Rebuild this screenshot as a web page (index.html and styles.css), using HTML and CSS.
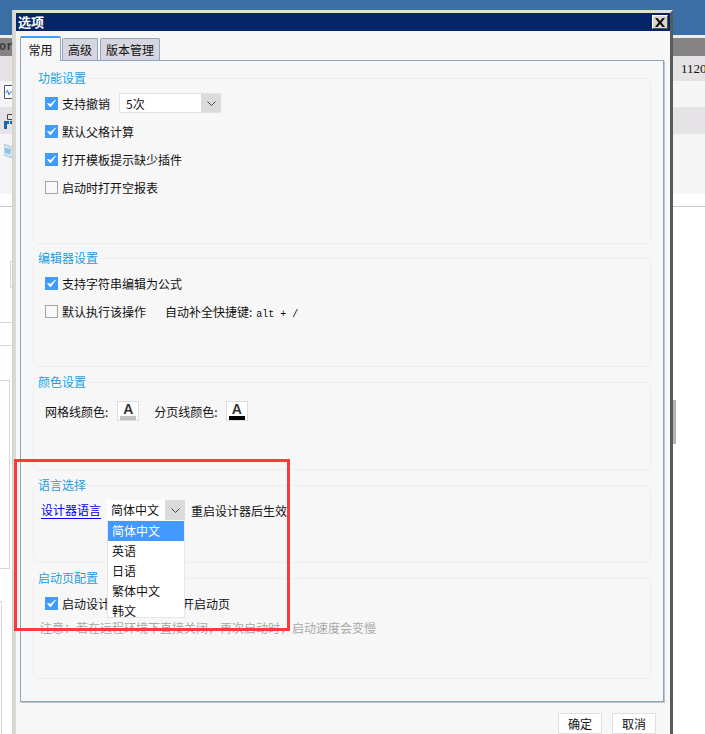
FILE: index.html
```html
<!DOCTYPE html>
<html>
<head>
    <meta charset="utf-8">
    <title>选项</title>
    <link rel="stylesheet" href="styles.css">
</head>
<body>

    <!-- designer window behind the dialog -->
    <div class="desk">
        <div class="desk-top"></div>
        <div class="desk-head"><span class="head-text">ore</span></div>
        <div class="desk-row shade"><span class="row-num">1120</span></div>
        <div class="desk-row plain"></div>
        <div class="desk-row shade tall"></div>
        <div class="desk-row plain wide"></div>
        <div class="desk-rest">
            <div class="rest-left">
                <div class="bit-field"></div>
                <div class="bit-line first"></div>
                <div class="bit-line"></div>
                <div class="bit-box"></div>
                <div class="bit-box last"></div>
            </div>
            <div class="bit-right"></div>
        </div>
    </div>
    <svg class="desk-icon icon-a" width="9" height="15" viewBox="0 0 9 15"><path d="M.5.5h8.500v13H.5z" fill="#fff" stroke="#555"/><path d="M2 8l1.500-3 1.500 5 1.500-3H9" fill="none" stroke="#3a7fc0"/></svg>
    <svg class="desk-icon icon-b" width="9" height="16" viewBox="0 0 9 16"><path d="M3.500 1.500h6v5h-6z" fill="none" stroke="#444"/><path d="M0 8h5v3H3v5H0zM6 8h3v3H6z" fill="#1466ad"/></svg>
    <svg class="desk-icon icon-c" width="10" height="16" viewBox="0 0 10 16"><path d="M0 1l10 4-2 10-8-3z" fill="#cfe6f3" stroke="#a9c7da"/><path d="M1 5l6 1-1 5-5-1z" fill="#8cc4e6"/></svg>

    <div class="dialog">
        <div class="titlebar">
            <span class="title">选项</span>
            <button class="close" type="button">
                <svg width="10" height="9" viewBox="0 0 10 9"><path d="M0 0h2.500L5 3l2.500-3H10L6.500 4.500 10 9H7.500L5 6 2.500 9H0l3.500-4.500z" fill="#111"/></svg>
            </button>
        </div>

        <div class="tabs">
            <div class="tab active">常用</div>
            <div class="tab">高级</div>
            <div class="tab">版本管理</div>
        </div>

        <div class="panel">
            <fieldset class="group g1">
                <legend>功能设置</legend>
                <div class="row">
                    <svg class="check on" viewBox="0 0 13 13"><rect width="13" height="13" fill="#3f9bff"/><path d="M2.500 6.500l3 3.500 5-7-4.800 4.200z" fill="#fff" stroke="#fff" stroke-width=".8"/></svg>
                    <span>支持撤销</span>
                    <div class="combo combo-undo"><span class="combo-value">5次</span><span class="combo-arrow"><svg width="9" height="5" viewBox="0 0 9 5"><path d="M.5.500l4 4 4-4" fill="none" stroke="#444"/></svg></span></div>
                </div>
                <div class="row">
                    <svg class="check on" viewBox="0 0 13 13"><rect width="13" height="13" fill="#3f9bff"/><path d="M2.500 6.500l3 3.500 5-7-4.800 4.200z" fill="#fff" stroke="#fff" stroke-width=".8"/></svg>
                    <span>默认父格计算</span>
                </div>
                <div class="row">
                    <svg class="check on" viewBox="0 0 13 13"><rect width="13" height="13" fill="#3f9bff"/><path d="M2.500 6.500l3 3.500 5-7-4.800 4.200z" fill="#fff" stroke="#fff" stroke-width=".8"/></svg>
                    <span>打开模板提示缺少插件</span>
                </div>
                <div class="row">
                    <span class="check off"></span>
                    <span>启动时打开空报表</span>
                </div>
            </fieldset>

            <fieldset class="group g2">
                <legend>编辑器设置</legend>
                <div class="row">
                    <svg class="check on" viewBox="0 0 13 13"><rect width="13" height="13" fill="#3f9bff"/><path d="M2.500 6.500l3 3.500 5-7-4.800 4.200z" fill="#fff" stroke="#fff" stroke-width=".8"/></svg>
                    <span>支持字符串编辑为公式</span>
                </div>
                <div class="row">
                    <span class="check off"></span>
                    <span>默认执行该操作</span>
                    <span class="hint">自动补全快捷键:<span class="mono">alt + /</span></span>
                </div>
            </fieldset>

            <fieldset class="group g3">
                <legend>颜色设置</legend>
                <div class="row color-row">
                    <span>网格线颜色:</span>
                    <span class="swatch"><span class="swatch-a">A</span><span class="swatch-bar grey"></span></span>
                    <span class="color-second">分页线颜色:</span>
                    <span class="swatch last"><span class="swatch-a">A</span><span class="swatch-bar black"></span></span>
                </div>
            </fieldset>

            <fieldset class="group g4">
                <legend>语言选择</legend>
                <div class="row lang-row">
                    <span class="lang-link">设计器语言</span>
                    <div class="combo combo-lang"><span class="combo-value">简体中文</span><span class="combo-arrow"><svg width="9" height="5" viewBox="0 0 9 5"><path d="M.5.500l4 4 4-4" fill="none" stroke="#444"/></svg></span></div>
                    <span>重启设计器后生效</span>
                </div>
            </fieldset>

            <fieldset class="group g5">
                <legend>启动页配置</legend>
                <div class="row">
                    <svg class="check on" viewBox="0 0 13 13"><rect width="13" height="13" fill="#3f9bff"/><path d="M2.500 6.500l3 3.500 5-7-4.800 4.200z" fill="#fff" stroke="#fff" stroke-width=".8"/></svg>
                    <span>启动设计器时会自动打开启动页</span>
                </div>
                <div class="note">注意：若在远程环境下直接关闭，再次启动时，启动速度会变慢</div>
            </fieldset>
        </div>

        <div class="actions">
            <button class="btn" type="button">确定</button>
            <button class="btn" type="button">取消</button>
        </div>
    </div>

    <!-- open dropdown of the language combo -->
    <ul class="menu">
        <li class="selected">简体中文</li>
        <li>英语</li>
        <li>日语</li>
        <li>繁体中文</li>
        <li>韩文</li>
    </ul>

    <!-- red annotation box -->
    <div class="mark"></div>

</body>
</html>
```

FILE: styles.css
```css
html, body {
    margin: 0;
    height: 734px;
    overflow: hidden;
}

body {
    position: relative;
    background-color: #fff;
    font-family: "Noto Sans CJK SC", "Liberation Sans", sans-serif;
    font-size: 12px;
    color: #111;
}

/* background window */
.desk {
    display: flex;
    flex-direction: column;
    height: 734px;
}

.desk > div {
    flex: none;
}

.desk-top {
    height: 35px;
    background-color: #3a6ea5;
    border-bottom: 3px solid #eeeeee;
}

.desk-head {
    display: flex;
    height: 18px;
    background-color: #858383;
    overflow: hidden;
}

.head-text {
    margin-left: -1px;
    font-family: "Liberation Mono", monospace;
    font-weight: bold;
    line-height: 18px;
    color: #3c3c3c;
}

.desk-row {
    display: flex;
    justify-content: flex-end;
}

.shade {
    height: 25px;
    background-color: #e6e3e6;
}

.shade.tall {
    height: 27px;
}

.plain {
    height: 26px;
    background-color: #f5f5f5;
}

.plain.wide {
    height: 60px;
}

.row-num {
    width: 24px;
    font-family: "Liberation Serif", serif;
    font-size: 13px;
    line-height: 25px;
}

.desk-rest {
    display: flex;
    justify-content: space-between;
    height: 527px;
    overflow: hidden;
    background-color: #fff;
    margin-top: 12px;
    border-top: 1px solid #c8c8c8;
}

.rest-left {
    width: 13px;
}

.bit-field {
    box-sizing: border-box;
    width: 3px;
    height: 27px;
    margin: 54px 0 0 10px;
    border: 1px solid #d8d8d8;
    border-right: none;
}

.bit-line {
    height: 1px;
    margin-top: 22px;
    background-color: #d8d4d8;
}

.bit-line.first {
    margin-top: 34px;
}

.bit-box {
    box-sizing: border-box;
    width: 10px;
    height: 189px;
    margin-top: 34px;
    border: 1px solid #d8d4d8;
    border-left: none;
}

.bit-box.last {
    width: 2px;
    height: 140px;
    margin-top: 32px;
    border-bottom: none;
}

.bit-right {
    box-sizing: border-box;
    width: 32px;
    height: 44px;
    margin-top: 193px;
    border-left: 3px solid #b4b4b4;
    background-color: #fff;
}

.desk-icon {
    position: absolute;
    left: 4px;
}

.icon-a { top: 85px; }
.icon-b { top: 113px; }
.icon-c { top: 143px; }

/* dialog */
.dialog {
    position: absolute;
    top: 10px;
    left: 13px;
    box-sizing: border-box;
    width: 660px;
    height: 730px;
    background-color: #f7f7f7;
    border: 3px solid #e2dfd8;
    border-left-color: #dcd9d2;
    border-right-color: #5a5a5a;
    box-shadow: -1px 0 0 #cfcfcf;
}

.titlebar {
    display: flex;
    justify-content: space-between;
    align-items: center;
    height: 18px;
    padding: 0 2px;
    background-color: #06246a;
}

.title {
    margin-top: -2px;
    font-size: 13px;
    font-weight: bold;
    color: #fff;
}

.close {
    display: flex;
    align-items: center;
    justify-content: center;
    width: 16px;
    height: 14px;
    padding: 0;
    background-color: #d8d5ce;
    border: 1px solid;
    border-color: #fff #555 #555 #fff;
}

.tabs {
    display: flex;
    align-items: flex-end;
    gap: 2px;
    height: 29px;
    padding-left: 4px;
}

.tab {
    box-sizing: border-box;
    height: 22px;
    padding: 0 5px;
    line-height: 22px;
    text-align: center;
    background-color: #d5d6df;
    border: 1px solid #8fa8c0;
    border-bottom: none;
    border-radius: 2px 2px 0 0;
}

.tab.active {
    position: relative;
    top: 1px;
    width: 41px;
    height: 25px;
    margin-right: -1px;
    line-height: 23px;
    background-color: #f7f7f7;
    border-top: 2px solid #3f9bff;
    z-index: 1;
}

.panel {
    display: flex;
    flex-direction: column;
    gap: 8px;
    box-sizing: border-box;
    width: 644px;
    height: 642px;
    margin-left: 4px;
    padding: 10px 12px 0;
    border: 1px solid #8aa5bf;
    box-shadow: 1px 1px 0 #c4c4c4;
}

.group {
    box-sizing: border-box;
    flex: none;
    margin: 0;
    padding: 4px 11px 0;
    min-width: 0;
    border: 1px solid #eeeeee;
    border-radius: 5px;
}

.group legend {
    margin-left: -9px;
    padding: 0 2px;
    line-height: 14px;
    color: #1a9fe0;
}

.g1 { height: 173px; }
.g2 { height: 116px; margin-top: -1px; }
.g3 { height: 95px; }
.g4 { height: 85px; }
.g5 { height: 108px; }

.row {
    display: flex;
    align-items: center;
    height: 28px;
    white-space: nowrap;
}

.check {
    box-sizing: border-box;
    flex: none;
    width: 13px;
    height: 13px;
    margin-right: 4px;
}

.check.off {
    background-color: #f9f9f9;
    border: 1px solid #a4a4a4;
}

.combo {
    display: flex;
    box-sizing: border-box;
    height: 20px;
    background-color: #fff;
}

.combo-value {
    flex: 1;
    padding-left: 6px;
    line-height: 19px;
}

.combo-arrow {
    display: flex;
    align-items: center;
    justify-content: center;
    width: 20px;
    background-color: #dcdadc;
}

.combo-undo {
    width: 102px;
    margin-left: 9px;
    border: 1px solid #e2e2e2;
    border-right: none;
}

.combo-lang {
    width: 78px;
    margin: 0 6px;
}

.combo-lang .combo-value {
    padding-left: 4px;
}

.hint {
    margin-left: 19px;
}

.mono {
    margin-left: 4px;
    font-family: "Liberation Mono", monospace;
    font-size: 10px;
}

.color-row {
    height: 24px;
    margin-top: 6px;
}

.swatch {
    display: flex;
    flex-direction: column;
    align-items: center;
    box-sizing: border-box;
    width: 22px;
    height: 20px;
    margin-left: 9px;
    background-color: #fff;
    border: 1px solid #dddddd;
}

.swatch.last {
    margin-left: 8px;
}

.swatch-a {
    height: 12px;
    margin-top: 1px;
    font-family: "Liberation Sans", sans-serif;
    font-size: 14px;
    font-weight: bold;
    line-height: 12px;
    color: #333;
}

.swatch-bar {
    width: 16px;
    height: 4px;
    margin-top: 1px;
}

.swatch-bar.grey { background-color: #c0c0c0; }
.swatch-bar.black { background-color: #000; }

.color-second {
    margin-left: 15px;
}

.lang-row {
    margin-left: -4px;
    height: 24px;
    margin-top: 2px;
}

.lang-link {
    color: #0000ee;
    line-height: 17px;
    border-bottom: 1px solid #0000ee;
}

.note {
    margin: 3px 0 0 -5px;
    line-height: 16px;
    color: #a8a8a8;
}

.actions {
    display: flex;
    justify-content: flex-end;
    gap: 10px;
    margin-top: 11px;
    padding-right: 14px;
}

.btn {
    width: 44px;
    height: 21px;
    padding: 0;
    font: inherit;
    color: #111;
    background-color: #fff;
    border: 1px solid #e0e0e0;
}

/* dropdown list, over the dialog */
.menu {
    position: absolute;
    top: 521px;
    left: 107px;
    box-sizing: border-box;
    width: 78px;
    height: 97px;
    margin: 0;
    padding: 0;
    list-style: none;
    background-color: #fff;
    border: 1px solid #e6e6e6;
    border-top: none;
}

.menu li {
    height: 20px;
    padding-left: 4px;
    line-height: 20px;
}

.menu li.selected {
    color: #fff;
    background-color: #4499ff;
}

/* annotation */
.mark {
    position: absolute;
    top: 459px;
    left: 14px;
    box-sizing: border-box;
    width: 276px;
    height: 172px;
    border: 3px solid #fb3a3a;
}
```
